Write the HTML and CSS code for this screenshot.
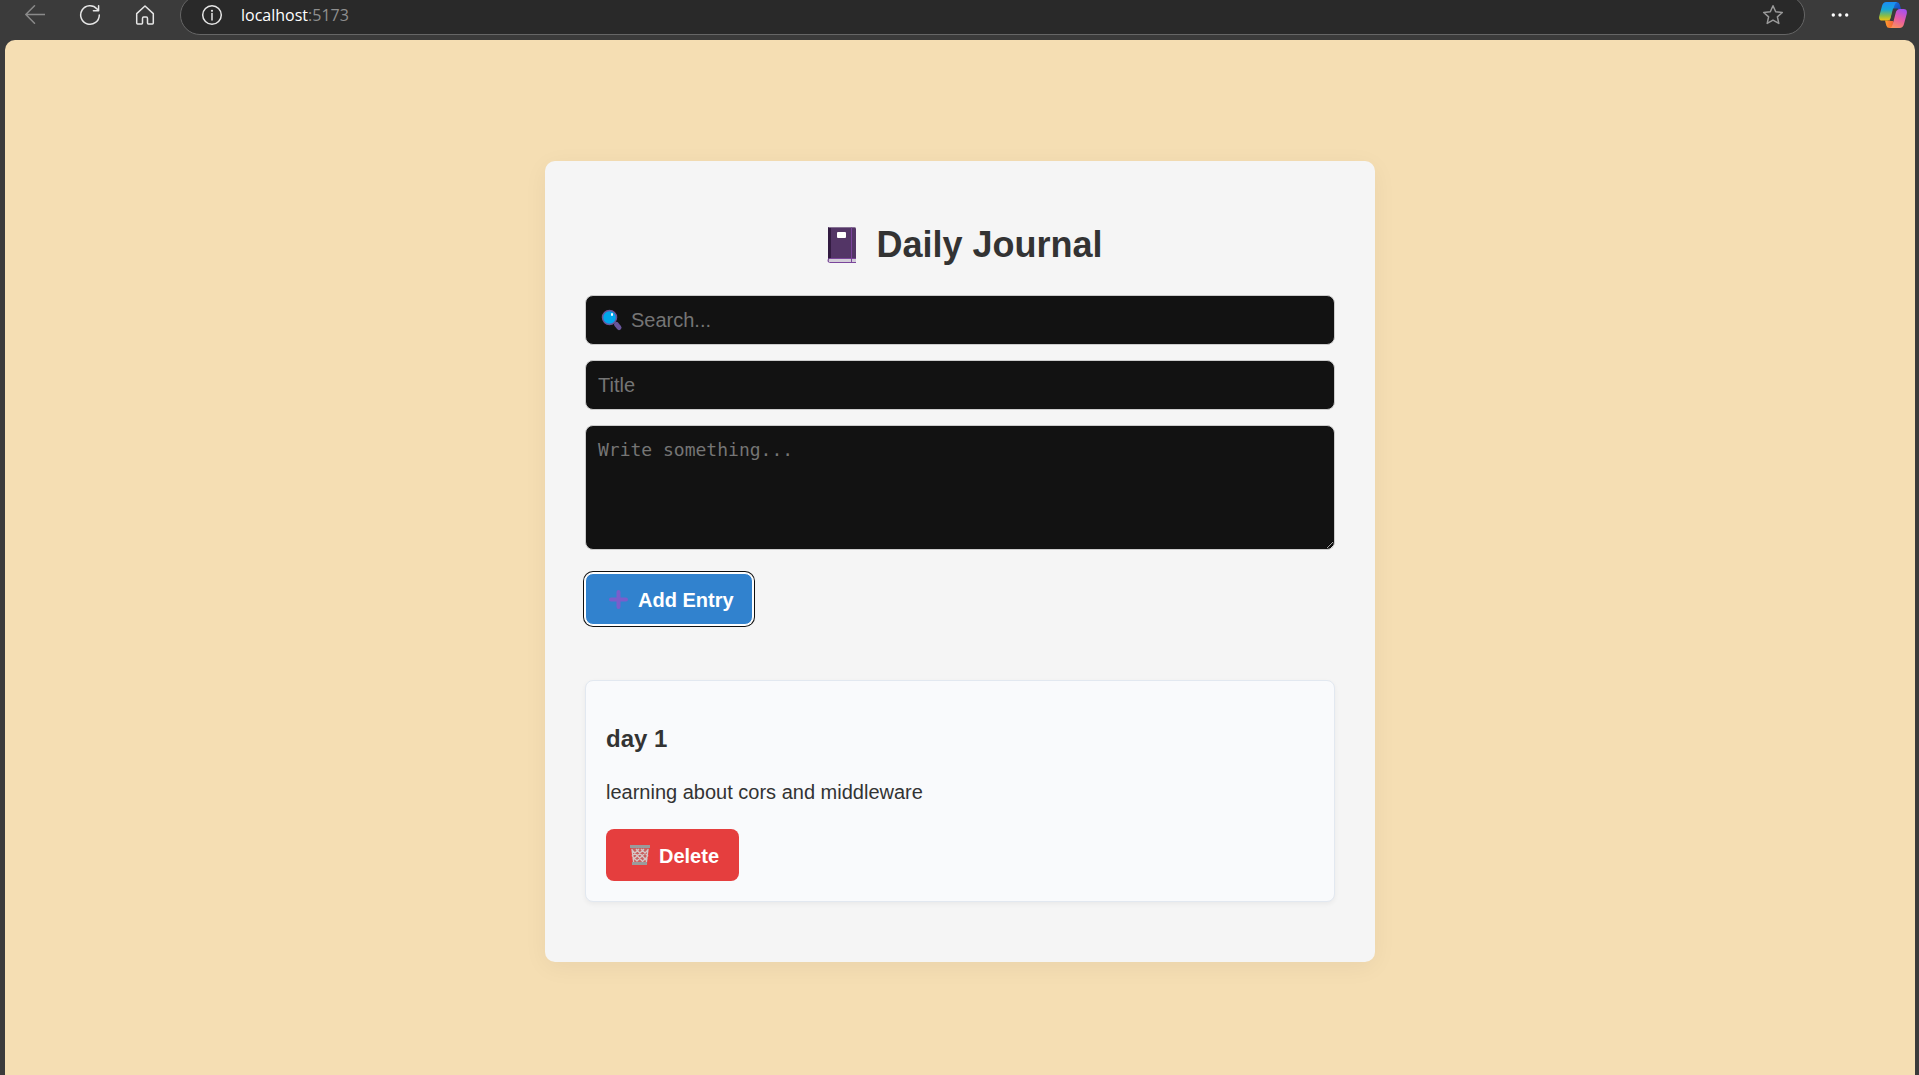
FILE: index.html
```html
<!DOCTYPE html>
<html lang="en">
<head>
<meta charset="utf-8">
<meta name="viewport" content="width=device-width, initial-scale=1">
<title>Daily Journal</title>
<link rel="stylesheet" href="styles.css">
</head>
<body>
<header class="toolbar">
  <button class="tool tool-dim" type="button" aria-label="Back">
    <svg width="20" height="20" viewBox="0 0 20 20"><path d="M20 9.500H.8M9.500.8.8 9.500l8.700 8.700"/></svg>
  </button>
  <button class="tool" type="button" aria-label="Refresh">
    <svg width="22" height="22" viewBox="0 0 22 22"><path d="M20.300 11A9.300 9.300 0 1 1 18 4.900l1.300 1.600M19.600 1.800v5h-5.200"/></svg>
  </button>
  <button class="tool" type="button" aria-label="Home">
    <svg width="20" height="20" viewBox="0 0 20 20"><path d="M1.700 8.600 10 1l8.300 7.600V18q0 .9-.9.900h-4.100q-.8 0-.8-.9v-4.500q0-1.500-1.200-1.500H8.700q-1.200 0-1.200 1.500V18q0 .9-.8.900H2.600q-.9 0-.9-.9z"/></svg>
  </button>
  <div class="address">
    <svg class="info" width="22" height="22" viewBox="0 0 22 22"><circle cx="11" cy="11" r="9.300"/><path d="M11 9.500v6.500"/><circle class="dot" cx="11" cy="6.800" r="1.100"/></svg>
    <span class="url">localhost<span class="port">:5173</span></span>
    <button class="star" type="button" aria-label="Add to favorites">
      <svg width="22" height="22" viewBox="0 0 22 22"><path d="m11 1.800 2.700 6 6.600.7-4.900 4.400 1.400 6.500-5.800-3.300-5.800 3.300 1.400-6.500-4.900-4.400 6.600-.7z"/></svg>
    </button>
  </div>
  <button class="tool" type="button" aria-label="Settings and more">
    <svg class="more" width="20" height="20" viewBox="0 0 20 20"><circle cx="3.300" cy="10" r="1.700"/><circle cx="10" cy="10" r="1.700"/><circle cx="16.700" cy="10" r="1.700"/></svg>
  </button>
  <button class="copilot" type="button" aria-label="Copilot">
    <svg width="28" height="26" viewBox="0 0 28 26">
      <defs>
        <linearGradient id="cool" x1="0" y1="0" x2="0" y2="1"><stop offset="0" stop-color="#1b8cf5"/><stop offset=".4" stop-color="#16a6d8"/><stop offset=".75" stop-color="#8dbd45"/><stop offset="1" stop-color="#f2c512"/></linearGradient>
        <linearGradient id="warm" x1=".7" y1="0" x2=".3" y2="1"><stop offset="0" stop-color="#a650ee"/><stop offset=".5" stop-color="#e65aa8"/><stop offset="1" stop-color="#fb8f5c"/></linearGradient>
        <linearGradient id="deep" x1="0" y1="0" x2="1" y2="1"><stop offset="0" stop-color="#1a7de8"/><stop offset="1" stop-color="#1742b0"/></linearGradient>
        <linearGradient id="fire" x1="0" y1="0" x2="1" y2="0"><stop offset="0" stop-color="#ffa02d"/><stop offset="1" stop-color="#f04a3c"/></linearGradient>
      </defs>
      <path fill="url(#deep)" d="M11 0h6.500q2.500 0 3.200 2.500L22 7h-4q-2.500 0-3.200 2.500L14 7z"/>
      <path fill="url(#fire)" d="M17 26h-6.500q-2.500 0-3.200-2.500L6 18.500h4q2.500 0 3.200-2.500l.8 3z"/>
      <path fill="url(#cool)" d="M7.500 0H18q-2 .8-2.800 4l-3 11.500q-.8 3-4 3H3.500Q-.8 18.500.3 14L3 4Q4 0 7.500 0z"/>
      <path fill="#3b3b3b" d="M14 6.500h5L14.500 19H11z"/>
      <path fill="url(#warm)" d="M20.500 26H11q2-.8 2.800-4l3-11.500q.9-3.500 4.200-3.500h3.500q4.300 0 3.200 5L25 22q-1 4-4.500 4z"/>
    </svg>
  </button>
</header>

<main class="page">
  <section class="journal">
    <h1 class="heading">
      <svg width="49" height="38" viewBox="0 0 49 38">
        <path fill="#533566" d="M12 1h25a2 2 0 0 1 2 2v33H11V2a1 1 0 0 1 1-1z"/>
        <path fill="#321b41" d="M11 2.500A1.500 1.500 0 0 1 12.500 1H14v31h-3z"/>
        <path fill="#8d7a99" d="M12 1h26v.9H12z"/>
        <path fill="#d3cdd8" d="M11.500 33H39v3H11.500z"/>
        <path fill="none" stroke="#7a459b" d="M39 32.500H12.500q-1.500 0-1.500 2t1.500 2H39M34.500 1.500v35"/>
        <rect x="20" y="6" width="9" height="6" rx="1" fill="#fff"/>
      </svg>
      <span>Daily Journal</span>
    </h1>

    <form class="entry-form">
      <label class="field search">
        <svg width="27" height="24" viewBox="0 0 27 24">
          <path stroke="#69569c" stroke-width="5" stroke-linecap="round" d="m18.500 16.500 2.500 3"/>
          <circle cx="11.500" cy="9.500" r="7" fill="#00a6ed" stroke="#69569c" stroke-width="1.500"/>
          <rect x="13" y="5" width="2" height="3" rx="1" fill="#fff"/>
        </svg>
        <input class="search-input" type="text" placeholder="Search..." aria-label="Search">
      </label>
      <input class="field" type="text" placeholder="Title" aria-label="Title">
      <textarea class="field note" placeholder="Write something..." aria-label="Entry text"></textarea>
      <button class="btn btn-add" type="button">
        <svg width="27" height="24" viewBox="0 0 27 24"><path stroke="#7a5ecb" stroke-width="4" stroke-linecap="round" d="M6 11.500h15M13.500 4v15"/></svg>
        <span>Add Entry</span>
      </button>
    </form>

    <article class="entry">
      <h3 class="entry-title">day 1</h3>
      <p class="entry-text">learning about cors and middleware</p>
      <button class="btn btn-delete" type="button">
        <svg width="27" height="24" viewBox="0 0 27 24">
          <path fill="#c9605f" d="M5 4h18l-2 17H7z"/>
          <path fill="none" stroke="#d6c6c6" stroke-width="1.300" d="m6 5 2 16m14-16-2 16M6 6l12 13M10 5l10 11M15 5l7 7M22 6 9 19M18 5 7 16M13 5l-7 7M6 12l8 8M22 12l-7 7"/>
          <path fill="#9b9b9b" d="M4 1h20v3H4zM6 18h15v3H6z"/>
        </svg>
        <span>Delete</span>
      </button>
    </article>
  </section>
</main>
</body>
</html>
```
FILE: styles.css
```css
* {
  box-sizing: border-box;
}

body {
  margin: 0;
  min-height: 100vh;
  display: flex;
  flex-direction: column;
  background: #3b3b3b;
  color: #333;
  font-family: Arial, "Liberation Sans", sans-serif;
  font-size: 20px;
}

button {
  font-family: inherit;
  cursor: pointer;
}

svg {
  display: block;
  flex: none;
}

/* Browser toolbar */
.toolbar {
  height: 40px;
  padding: 0 12px 10px 17px;
  display: flex;
  align-items: center;
}

.tool,
.star,
.copilot {
  padding: 0;
  border: 0;
  background: none;
  display: flex;
  align-items: center;
  justify-content: center;
  flex: none;
}

.tool {
  width: 36px;
  height: 30px;
  margin-right: 19px;
}

.tool svg,
.info,
.star svg {
  fill: none;
  stroke: #e6e6e6;
  stroke-width: 1.5;
  stroke-linejoin: round;
  stroke-linecap: round;
}

.tool-dim svg {
  stroke: #8a8a8a;
}

.tool .more {
  fill: #fff;
  stroke: none;
}

.address {
  flex: 1;
  height: 40px;
  margin-right: 17px;
  margin-left: -2px;
  padding: 0 20px;
  display: flex;
  align-items: center;
  gap: 18px;
  border: 1px solid #666;
  border-radius: 20px;
  background: #292929;
}

.address + .tool {
  margin-right: 21px;
}

.info .dot {
  fill: #e6e6e6;
  stroke: none;
}

.url {
  flex: 1;
  color: #fff;
  font-family: "Segoe UI", "Open Sans", sans-serif;
  font-size: 16px;
  line-height: 22px;
}

.port {
  color: #8f8f8f;
}

.star svg {
  stroke: #9a9a9a;
}

.copilot {
  width: 28px;
}

/* Page */
.page {
  flex: 1;
  margin: 0 4px 0 5px;
  padding: 121px 20px 40px;
  border-radius: 10px 10px 0 0;
  background: #f5deb3;
}

.journal {
  max-width: 830px;
  margin: 0 auto;
  padding: 60px 40px;
  border-radius: 10px;
  background: #f5f5f5;
  box-shadow: 0 5px 25px rgba(0, 0, 0, 0.05);
}

.heading {
  margin: 0 0 26px;
  display: flex;
  align-items: center;
  justify-content: center;
  gap: 10px;
  font-size: 36px;
  line-height: 48px;
}

.entry-form {
  display: flex;
  flex-direction: column;
  gap: 15px;
}

.field {
  width: 100%;
  height: 50px;
  padding: 12px;
  border: 1px solid #ccc;
  border-radius: 8px;
  background: #121212;
  color: #fff;
  font-family: inherit;
  font-size: 20px;
}

.search {
  display: flex;
  align-items: center;
  gap: 6px;
}

.search-input {
  flex: 1;
  min-width: 0;
  padding: 0;
  border: 0;
  outline: 0;
  background: none;
  color: #fff;
  font: inherit;
}

::placeholder {
  color: #757575;
}

.note {
  display: block;
  height: 125px;
  resize: vertical;
  color-scheme: dark;
  font-family: Consolas, "DejaVu Sans Mono", monospace;
  font-size: 18px;
  line-height: 24px;
}

.btn {
  height: 52px;
  padding: 2px 20px 0;
  display: flex;
  align-items: center;
  gap: 6px;
  border: 0;
  border-radius: 8px;
  color: #fff;
  font-size: 20px;
  line-height: 24px;
  font-weight: bold;
}

.btn-add {
  align-self: flex-start;
  margin-top: 8px;
  padding: 2px 18px 0 19px;
  border: 1px solid #fff;
  background: #3182ce;
  box-shadow: 0 0 0 1px #fff, 0 0 0 2px #101010;
}

.btn-delete {
  background: #e53e3e;
}

.entry {
  margin-top: 55px;
  padding: 20px;
  border: 1px solid #e2e8f0;
  border-radius: 8px;
  background: #f9fafc;
  box-shadow: 0 2px 5px rgba(0, 0, 0, 0.05);
}

.entry-title {
  margin: 24px 0 26px;
  font-size: 24px;
  line-height: 28px;
}

.entry-text {
  margin: 0 0 24px;
  line-height: 26px;
}
```
